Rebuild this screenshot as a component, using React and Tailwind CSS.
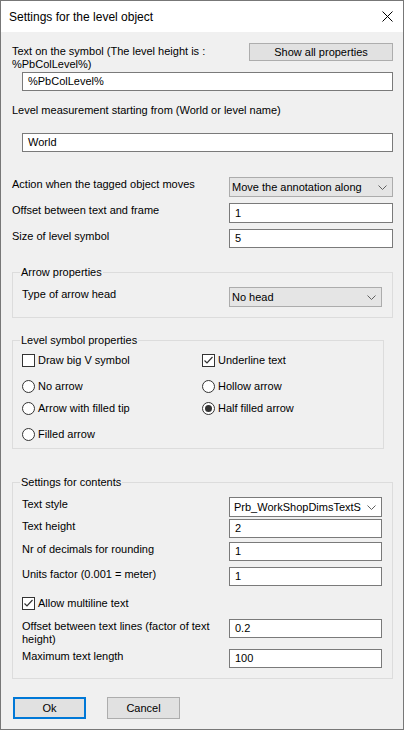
import { useState } from 'react';

const font = "font-['Liberation_Sans',Arial,sans-serif]";

function TextBox({ value, width, height = 'h-[19px]' }) {
  return (
    <div className={`${width} ${height} shrink-0 border border-[#7a7a7a] bg-white pl-[5px] flex items-center leading-[13px]`}>
      {value}
    </div>
  );
}

function Chevron() {
  return (
    <svg width="9" height="5" viewBox="0 0 9 5" className="shrink-0">
      <path d="M0.5 0.5 L4.5 4.5 L8.5 0.5" fill="none" stroke="#606060" strokeWidth="1" />
    </svg>
  );
}

function Combo({ value, width, white = false }) {
  return (
    <div
      className={`${width} h-[20px] shrink-0 border flex items-center overflow-hidden leading-[13px] ${
        white ? 'bg-white border-[#7a7a7a] pl-[4px]' : 'bg-[#e5e5e5] border-[#acacac] pl-[2px]'
      }`}
    >
      <span className="flex-1 overflow-hidden whitespace-nowrap">{value}</span>
      <span className="w-[20px] flex justify-center">
        <Chevron />
      </span>
    </div>
  );
}

function CheckBox({ checked, label }) {
  return (
    <div className="flex h-[16px] items-center">
      <span className="w-[13px] h-[13px] border border-[#333] bg-white flex items-center justify-center">
        {checked && (
          <svg width="11" height="11" viewBox="0 0 11 11">
            <path d="M1.5 5.5 L4 8 L9.5 2" fill="none" stroke="#333" strokeWidth="1.2" />
          </svg>
        )}
      </span>
      <span className="ml-[3px] leading-[13px]">{label}</span>
    </div>
  );
}

function Radio({ checked, label }) {
  return (
    <div className="flex h-[16px] items-center">
      <span className="w-[13px] h-[13px] rounded-full border border-[#333] bg-white flex items-center justify-center">
        {checked && <span className="w-[7px] h-[7px] rounded-full bg-[#333]" />}
      </span>
      <span className="ml-[3px] leading-[13px]">{label}</span>
    </div>
  );
}

function Group({ title, className, children }) {
  return (
    <div className={`relative border border-[#dcdcdc] ${className}`}>
      <span className="absolute -top-[7px] left-[7px] bg-[#f0f0f0] px-[1px] leading-[13px]">{title}</span>
      {children}
    </div>
  );
}

function FieldRow({ label, children, labelWidth, className = '' }) {
  return (
    <div className={`flex items-start ${className}`}>
      <div className={`${labelWidth} shrink-0 mt-[1px] leading-[13px]`}>{label}</div>
      {children}
    </div>
  );
}

export default function App() {
  const [open, setOpen] = useState(true);
  if (!open) return null;

  return (
    <div className={`${font} text-[11px] text-black w-[404px] h-[730px] border border-[#777] bg-[#f0f0f0] flex flex-col`}>
      <div className="h-[31px] bg-white flex items-center justify-between pl-[8px] shrink-0">
        <span className="text-[12px] leading-[16px]">Settings for the level object</span>
        <button onClick={() => setOpen(false)} className="w-[30px] h-[31px] flex items-center justify-center mr-[1px]" aria-label="Close">
          <svg width="11" height="11" viewBox="0 0 11 11">
            <path d="M0.5 0.5 L10.5 10.5 M10.5 0.5 L0.5 10.5" stroke="#000" strokeWidth="1" />
          </svg>
        </button>
      </div>

      <div className="pl-[11px] flex flex-col">
        <div className="mt-[11px] h-[29px] flex items-start justify-between">
          <div className="mt-[2px] leading-[13px]">
            Text on the symbol (The level height is :
            <br />
            %PbColLevel%)
          </div>
          <button className="w-[144px] h-[18px] mr-[10px] bg-[#e1e1e1] border border-[#adadad] leading-[13px]">
            Show all properties
          </button>
        </div>
        <div className="ml-[10px]">
          <TextBox value="%PbColLevel%" width="w-[371px]" />
        </div>

        <div className="mt-[13px] leading-[13px]">Level measurement starting from (World or level name)</div>
        <div className="ml-[10px] mt-[16px]">
          <TextBox value="World" width="w-[371px]" />
        </div>

        <FieldRow label="Action when the tagged object moves" labelWidth="w-[217px]" className="mt-[25px]">
          <Combo value="Move the annotation along" width="w-[164px]" />
        </FieldRow>
        <FieldRow label="Offset between text and frame" labelWidth="w-[217px]" className="mt-[6px]">
          <TextBox value="1" width="w-[164px]" height="h-[20px]" />
        </FieldRow>
        <FieldRow label="Size of level symbol" labelWidth="w-[217px]" className="mt-[6px]">
          <TextBox value="5" width="w-[164px]" />
        </FieldRow>

        <Group title="Arrow properties" className="mt-[24px] w-[381px] pl-[9px] pt-[14px] pb-[10px]">
          <FieldRow label="Type of arrow head" labelWidth="w-[207px]">
            <Combo value="No head" width="w-[153px]" />
          </FieldRow>
        </Group>

        <Group title="Level symbol properties" className="mt-[22px] w-[372px] pl-[9px] pt-[11px] pb-[6px]">
          <div className="grid grid-cols-[180px_1fr]">
            <CheckBox label="Draw big V symbol" />
            <CheckBox checked label="Underline text" />
            <div className="mt-[10px]"><Radio label="No arrow" /></div>
            <div className="mt-[10px]"><Radio label="Hollow arrow" /></div>
            <div className="mt-[6px]"><Radio label="Arrow with filled tip" /></div>
            <div className="mt-[6px]"><Radio checked label="Half filled arrow" /></div>
            <div className="mt-[10px]"><Radio label="Filled arrow" /></div>
          </div>
        </Group>

        <Group title="Settings for contents" className="mt-[33px] w-[381px] pl-[9px] pt-[14px] pb-[10px]">
          <FieldRow label="Text style" labelWidth="w-[207px]">
            <Combo white value="Prb_WorkShopDimsTextStyle" width="w-[153px]" />
          </FieldRow>
          <FieldRow label="Text height" labelWidth="w-[207px]" className="mt-[2px]">
            <TextBox value="2" width="w-[153px]" />
          </FieldRow>
          <FieldRow label="Nr of decimals for rounding" labelWidth="w-[207px]" className="mt-[4px]">
            <TextBox value="1" width="w-[153px]" />
          </FieldRow>
          <FieldRow label="Units factor (0.001 = meter)" labelWidth="w-[207px]" className="mt-[6px]">
            <TextBox value="1" width="w-[153px]" />
          </FieldRow>
          <div className="mt-[9px]">
            <CheckBox checked label="Allow multiline text" />
          </div>
          <FieldRow
            label={
              <>
                Offset between text lines (factor of text
                <br />
                height)
              </>
            }
            labelWidth="w-[207px]"
            className="mt-[8px]"
          >
            <TextBox value="0.2" width="w-[153px]" />
          </FieldRow>
          <FieldRow label="Maximum text length" labelWidth="w-[207px]" className="mt-[3px]">
            <TextBox value="100" width="w-[153px]" />
          </FieldRow>
        </Group>

        <div className="mt-[18px] ml-[1px] flex gap-[21px]">
          <button className="w-[73px] h-[22px] bg-[#e1e1e1] border-2 border-[#0078d7] leading-[13px]">Ok</button>
          <button className="w-[73px] h-[22px] bg-[#e1e1e1] border border-[#adadad] leading-[13px]">Cancel</button>
        </div>
      </div>
    </div>
  );
}
